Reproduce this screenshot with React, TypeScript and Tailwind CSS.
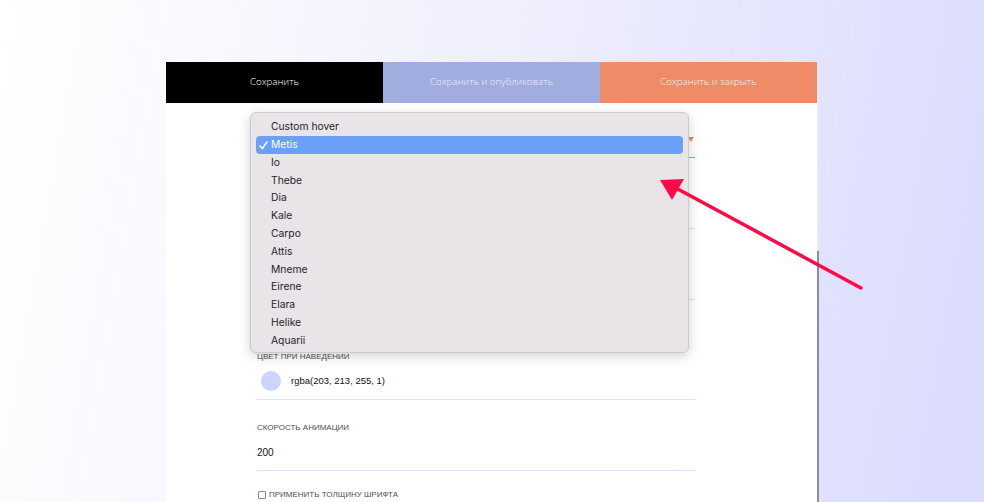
const OPTIONS = [
  "Custom hover",
  "Metis",
  "Io",
  "Thebe",
  "Dia",
  "Kale",
  "Carpo",
  "Attis",
  "Mneme",
  "Eirene",
  "Elara",
  "Helike",
  "Aquarii",
];

const SELECTED = "Metis";

// label/value are optional: the fields hidden under the open menu render only their lines
function Field({
  label,
  focused = false,
  className = "",
  children,
}: {
  label?: string;
  focused?: boolean;
  className?: string;
  children?: React.ReactNode;
}) {
  return (
    <div
      className={`relative pb-[6px] border-b ${
        focused ? "border-[#ef8b67]" : "border-[#dfe2f8]"
      } ${className}`}
    >
      <p className="h-[12px] leading-[12px] text-[8px] uppercase text-[#4f4f4f] font-['Liberation_Sans',sans-serif]">
        {label}
      </p>
      <div className="mt-[6px] h-[24px] flex items-center text-[10px] text-[#111] font-['Liberation_Sans',sans-serif]">
        {children}
      </div>
    </div>
  );
}

function SelectMenu() {
  return (
    <div className="absolute left-[84px] top-[50px] w-[439px] h-[241px] pt-[5px] px-[5px] rounded-[6px] bg-[#e8e4e8] border border-[#cdc9ce] shadow-[0_3px_12px_rgba(0,0,0,0.18)] font-['Inter',sans-serif]">
      {OPTIONS.map((option) => {
        const active = option === SELECTED;
        return (
          <div
            key={option}
            className={`relative h-[17.8px] flex items-center pl-[15px] rounded-[4px] text-[10.3px] ${
              active ? "bg-[#6aa0f8] text-white" : "text-[#262626]"
            }`}
          >
            {active && (
              <svg
                className="absolute left-[3px] top-[5px]"
                width="9"
                height="9"
                viewBox="0 0 9 9"
                fill="none"
              >
                <path
                  d="M1 5 L3.4 7.6 L8 1"
                  stroke="white"
                  strokeWidth="1.5"
                  strokeLinecap="round"
                  strokeLinejoin="round"
                />
              </svg>
            )}
            {option}
          </div>
        );
      })}
    </div>
  );
}

function Arrow() {
  return (
    <svg
      className="absolute inset-0 pointer-events-none"
      width="984"
      height="502"
      viewBox="0 0 984 502"
    >
      <line
        x1="861"
        y1="288"
        x2="674"
        y2="187"
        stroke="#ff0a47"
        strokeWidth="3.5"
        strokeLinecap="round"
      />
      <polygon points="660,180 684,179 672,200" fill="#ff0a47" />
    </svg>
  );
}

export default function App() {
  return (
    <div className="relative w-[984px] h-[502px] overflow-hidden bg-[linear-gradient(100deg,#ffffff_0%,#f0f0fd_45%,#dadbfd_100%)] pt-[62px] pl-[166px]">
      <div className="relative w-[653px] h-[440px] bg-white border-r-2 border-[#e7e8fb]">
        <div className="grid grid-cols-3 h-[41px] text-[9.7px] font-light font-['Open_Sans',sans-serif]">
          <button className="bg-black text-white">Сохранить</button>
          <button className="bg-[#a1acdf] text-[#eef0fb]">
            Сохранить и опубликовать
          </button>
          <button className="bg-[#ef8b67] text-[#fff3ee]">
            Сохранить и закрыть
          </button>
        </div>

        <div className="ml-[91px] w-[438px] pt-[6px]">
          <Field focused className="mb-[22px]">
            <span className="ml-auto mr-[1px] w-0 h-0 border-l-[3px] border-r-[3px] border-t-[5px] border-l-transparent border-r-transparent border-t-[#ef8b67]" />
          </Field>
          <Field className="mb-[22px]" />
          <Field className="mb-[51px]" />
          <Field label="Цвет при наведении" className="mb-[22px]">
            <span className="ml-[4px] w-[20px] h-[20px] rounded-full bg-[rgb(203,213,255)]" />
            <span className="ml-[10px] text-[9.5px]">rgba(203, 213, 255, 1)</span>
          </Field>
          <Field label="Скорость анимации">
            <span>200</span>
          </Field>
          <label className="mt-[18px] flex items-center gap-[3px] h-[12px] text-[8px] uppercase text-[#4f4f4f] font-['Liberation_Sans',sans-serif]">
            <span className="ml-[1px] w-[8px] h-[8px] rounded-[1px] border border-[#8a8a8a] bg-white" />
            Применить толщину шрифта
          </label>
        </div>

        <SelectMenu />

        <div className="absolute right-[-2px] top-[189px] w-[2px] h-[251px] bg-[#8c8ba8]" />
      </div>

      <Arrow />
    </div>
  );
}
